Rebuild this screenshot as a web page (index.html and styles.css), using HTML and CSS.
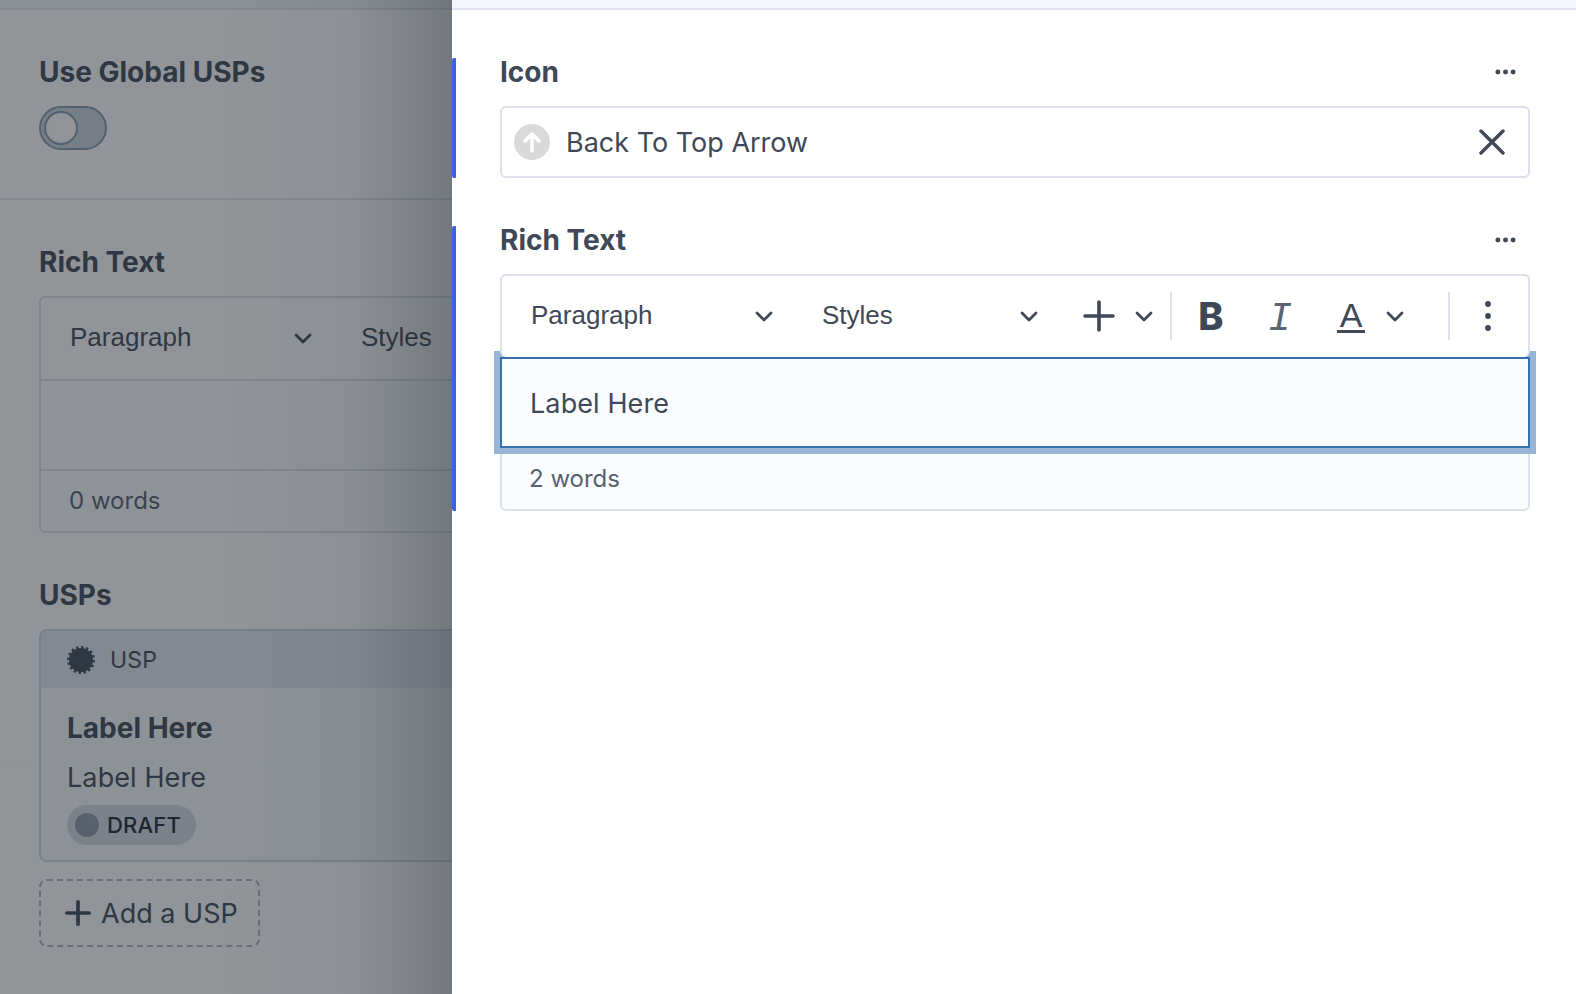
FILE: index.html
```html
<!DOCTYPE html>
<html lang="en">
<head>
  <meta charset="UTF-8" />
  <title>Edit USP</title>
  <link rel="stylesheet" href="styles.css">
</head>
<body>
  <div class="app">
    <div class="under">
      <div class="topbar"></div>
      <section class="block block-first">
        <h2 class="label">Use Global USPs</h2>
        <div class="toggle"><span class="knob"></span></div>
      </section>
      <section class="block block-rest">
        <h2 class="label">Rich Text</h2>
        <div class="editor">
          <div class="toolbar">
            <div class="select select-para"><span>Paragraph</span><svg class="chev" viewBox="0 0 18 11"><path d="M2 2l7 7 7-7"/></svg></div>
            <div class="select select-styles"><span>Styles</span><svg class="chev" viewBox="0 0 18 11"><path d="M2 2l7 7 7-7"/></svg></div>
          </div>
          <div class="content"></div>
          <div class="footer">0 words</div>
        </div>
        <h2 class="label label-usps">USPs</h2>
        <div class="card">
          <div class="card-head">
            <svg class="badge" viewBox="0 0 30 30">
              <circle cx="15" cy="15" r="12"/>
              <circle class="teeth" cx="15" cy="15" r="12.5" pathLength="64"/>
            </svg>
            <span>USP</span>
          </div>
          <div class="card-body">
            <div class="card-title">Label Here</div>
            <div class="card-text">Label Here</div>
            <div class="pill"><span class="pill-dot"></span>DRAFT</div>
          </div>
        </div>
        <div class="add-btn">
          <svg class="add-plus" viewBox="0 0 28 28"><path d="M14 2v24M2 14h24"/></svg>
          Add a USP
        </div>
      </section>
      <div class="backdrop"></div>
    </div>

    <div class="panel">
      <div class="topbar"></div>
      <div class="field field-icon">
        <div class="field-head">
          <h2 class="label">Icon</h2>
          <svg class="more" viewBox="0 0 22 6"><circle cx="3" cy="3" r="2.6"/><circle cx="11" cy="3" r="2.6"/><circle cx="19" cy="3" r="2.6"/></svg>
        </div>
        <div class="picker">
          <span class="picker-icon"><svg viewBox="0 0 36 36"><path d="M18 27V11M11 17l7-7 7 7"/></svg></span>
          <span class="picker-name">Back To Top Arrow</span>
          <svg class="picker-clear" viewBox="0 0 26 26"><path d="M2 2l22 22M24 2L2 24"/></svg>
        </div>
      </div>
      <div class="field">
        <div class="field-head">
          <h2 class="label">Rich Text</h2>
          <svg class="more" viewBox="0 0 22 6"><circle cx="3" cy="3" r="2.6"/><circle cx="11" cy="3" r="2.6"/><circle cx="19" cy="3" r="2.6"/></svg>
        </div>
        <div class="editor">
          <div class="toolbar">
            <div class="select select-para"><span>Paragraph</span><svg class="chev" viewBox="0 0 18 11"><path d="M2 2l7 7 7-7"/></svg></div>
            <div class="select select-styles"><span>Styles</span><svg class="chev" viewBox="0 0 18 11"><path d="M2 2l7 7 7-7"/></svg></div>
            <svg class="tool-plus" viewBox="0 0 32 32"><path d="M16 2v28M2 16h28"/></svg>
            <svg class="chev chev-plus" viewBox="0 0 18 11"><path d="M2 2l7 7 7-7"/></svg>
            <span class="sep sep-one"></span>
            <span class="tool tool-b">B</span>
            <span class="tool tool-i">I</span>
            <span class="tool tool-a">A</span>
            <svg class="chev chev-a" viewBox="0 0 18 11"><path d="M2 2l7 7 7-7"/></svg>
            <span class="sep sep-two"></span>
            <svg class="tool-dots" viewBox="0 0 6 30"><circle cx="3" cy="3" r="2.9"/><circle cx="3" cy="15" r="2.9"/><circle cx="3" cy="27" r="2.9"/></svg>
          </div>
          <div class="content content-focus">Label Here</div>
          <div class="footer">2 words</div>
        </div>
      </div>
    </div>
  </div>
</body>
</html>
```

FILE: styles.css
```css
* {
  box-sizing: border-box;
}

html, body {
  margin: 0;
  height: 100%;
  overflow: hidden;
}

body {
  font-family: 'Inter', sans-serif;
  color: #3e4856;
  background: #fff;
}

.app {
  display: flex;
  height: 994px;
}

.topbar {
  height: 10px;
  background: #f3f6fb;
  border-bottom: 2px solid #e0e4ee;
}

.label {
  margin: 0 0 20px;
  font-size: 28px;
  line-height: 28px;
  height: 28px;
  font-weight: 700;
}

/* page behind the slide-over */
.under {
  position: relative;
  width: 452px;
  flex: none;
  overflow: hidden;
  background: #fff;
}

.backdrop {
  position: absolute;
  z-index: 3;
  inset: 0;
  background: linear-gradient(to right,
    rgba(30, 38, 46, .49) 0,
    rgba(30, 38, 46, .49) 50%,
    rgba(30, 38, 46, .51) 78%,
    rgba(30, 38, 46, .62) 100%);
}

.block {
  padding-left: 39px;
  width: 1000px;
}

.block-first {
  height: 190px;
  padding-top: 48px;
  border-bottom: 2px solid #e0e4ee;
}

.block-rest {
  padding-top: 48px;
}

.toggle {
  width: 68px;
  height: 44px;
  padding: 3px;
  background: #c9d0da;
  border: 2px solid #8499b3;
  border-radius: 22px;
}

.knob {
  display: block;
  width: 34px;
  height: 34px;
  background: #fff;
  border: 2px solid #8499b3;
  border-radius: 50%;
}

.label-usps {
  margin-top: 48px;
}

.card {
  height: 233px;
  background: #f8fafc;
  border: 2px solid #cdd5e0;
  border-radius: 8px;
}

.card-head {
  display: flex;
  align-items: center;
  gap: 14px;
  height: 57px;
  padding-left: 25px;
  background: #e3e8ef;
  border-radius: 6px 6px 0 0;
  font-size: 23px;
  letter-spacing: .2px;
}

.badge {
  width: 30px;
  height: 30px;
  fill: #3e4856;
}

.badge .teeth {
  fill: none;
  stroke: #3e4856;
  stroke-width: 3;
  stroke-dasharray: 2 2;
}

.card-body {
  padding: 24px 26px 0;
}

.card-title {
  font-size: 28px;
  line-height: 32px;
  font-weight: 700;
}

.card-text {
  margin-top: 18px;
  font-size: 27px;
  line-height: 32px;
  letter-spacing: .1px;
}

.pill {
  display: inline-flex;
  align-items: center;
  gap: 8px;
  height: 40px;
  margin-top: 11px;
  padding: 0 15px 0 8px;
  background: #d6dae1;
  border-radius: 20px;
  color: #1b2536;
  font-size: 22px;
  font-weight: 500;
  letter-spacing: .2px;
}

.pill-dot {
  width: 24px;
  height: 24px;
  border-radius: 50%;
  background: #8f98a8;
}

.add-btn {
  display: flex;
  align-items: center;
  gap: 10px;
  width: 221px;
  height: 68px;
  margin-top: 17px;
  padding-left: 24px;
  border: 2px dashed #a9b3c2;
  border-radius: 8px;
  font-size: 27px;
}

.add-plus {
  width: 26px;
  height: 26px;
  fill: none;
  stroke: #3e4856;
  stroke-width: 4;
  stroke-linecap: round;
}

/* slide-over panel */
.panel {
  flex: 1;
  min-width: 0;
}

.field {
  margin-top: 48px;
  padding: 0 46px 0 44px;
  border-left: 4px solid #3b63e8;
  border-radius: 2px;
}

.field-head {
  display: flex;
  align-items: center;
  justify-content: space-between;
  height: 28px;
  margin-bottom: 20px;
  padding-right: 14px;
}

.field-head .label {
  margin: 0;
}

.more {
  width: 21px;
  height: 6px;
  fill: #3e4856;
}

.picker {
  display: flex;
  align-items: center;
  height: 72px;
  padding: 0 23px 0 12px;
  border: 2px solid #dce0ea;
  border-radius: 6px;
}

.picker-icon {
  width: 36px;
  height: 36px;
  border-radius: 50%;
  background: #d9d9d9;
}

.picker-icon svg {
  display: block;
  fill: none;
  stroke: #fff;
  stroke-width: 3.4;
  stroke-linecap: round;
  stroke-linejoin: round;
}

.picker-name {
  flex: 1;
  margin-left: 16px;
  font-size: 27px;
}

.picker-clear {
  width: 26px;
  height: 26px;
  fill: none;
  stroke: #3e4856;
  stroke-width: 3.4;
  stroke-linecap: round;
}

.editor {
  position: relative;
  border: 2px solid #dce0ea;
  border-radius: 6px;
  width: 1030px;
  height: 237px;
}

.toolbar {
  position: relative;
  z-index: 2;
  display: flex;
  align-items: center;
  height: 83px;
  margin: -2px -2px 0;
  padding: 0 0 1px 29px;
  background: #fff;
  border: 2px solid #dce0ea;
  border-bottom: 0;
  border-radius: 6px;
  font-family: 'Liberation Sans', Arial, sans-serif;
  font-size: 26px;
}

.select {
  display: flex;
  align-items: center;
  justify-content: space-between;
  flex: none;
}

.select span {
  padding-bottom: 2px;
}

.select-para {
  width: 242px;
  margin-right: 49px;
}

.select-styles {
  width: 216px;
}

.chev {
  width: 18px;
  height: 11px;
  flex: none;
  fill: none;
  stroke: #3e4856;
  stroke-width: 2.8;
  stroke-linecap: round;
  stroke-linejoin: round;
}

.tool-plus {
  width: 32px;
  height: 32px;
  flex: none;
  margin-left: 45px;
  fill: none;
  stroke: #3e4856;
  stroke-width: 3.6;
  stroke-linecap: round;
}

.chev-plus {
  margin-left: 20px;
}

.sep {
  width: 2px;
  height: 48px;
  flex: none;
  background: #dce0ea;
}

.sep-one {
  margin-left: 17px;
}

.sep-two {
  margin-left: 44px;
}

.tool {
  display: flex;
  align-items: center;
  justify-content: center;
  flex: none;
  height: 40px;
}

.tool-b {
  width: 26px;
  margin-left: 26px;
  font-family: 'Inter', sans-serif;
  font-size: 38px;
  font-weight: 800;
}

.tool-i {
  width: 20px;
  margin-top: 6px;
  margin-left: 46px;
  font-family: 'Liberation Mono', monospace;
  font-size: 40px;
  font-weight: 400;
  font-style: italic;
  color: #5a6472;
}

.tool-a {
  width: 28px;
  margin-left: 47px;
  font-size: 34px;
  line-height: 30px;
  height: 34px;
  border-bottom: 3px solid #3e4856;
}

.chev-a {
  margin-left: 21px;
}

.tool-dots {
  width: 6px;
  height: 30px;
  flex: none;
  margin-left: 35px;
  fill: #3e4856;
}

.content {
  display: flex;
  align-items: center;
  height: 90px;
  margin: 0 -2px;
  padding: 2px 0 0 28px;
  background: #fbfcfe;
  font-size: 27px;
  letter-spacing: .1px;
}

.content-focus {
  position: relative;
  border: 2px solid #3470ab;
  box-shadow: 0 0 0 6px #98b5d6;
  height: 91px;
}

.footer {
  display: flex;
  align-items: center;
  height: 61px;
  padding-left: 27px;
  background: #fbfcfe;
  border-radius: 0 0 5px 5px;
  color: #566170;
  font-size: 24px;
}

.under .toolbar {
  border-bottom: 2px solid #dce0ea;
  border-radius: 6px 6px 0 0;
  height: 85px;
  padding-bottom: 0;
}

.under .content {
  height: 88px;
  margin: 0;
}

.under .footer {
  border-top: 2px solid #dce0ea;
  padding-left: 28px;
}
```
